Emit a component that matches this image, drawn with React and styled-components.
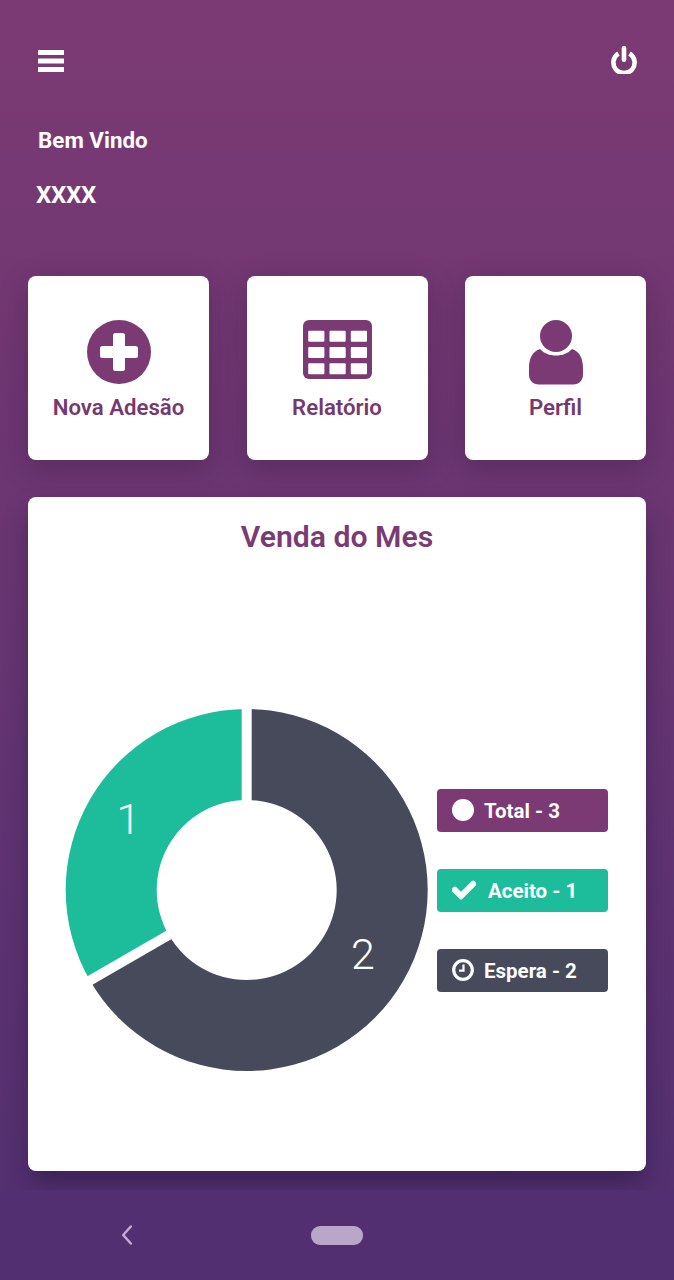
import React from "react";
import styled, { createGlobalStyle } from "styled-components";
import { FaCheck } from "react-icons/fa";

const PURPLE = "#7b3a73";
const GREEN = "#1dbd9b";
const SLATE = "#464a5b";

const GlobalStyle = createGlobalStyle`
  html, body {
    margin: 0;
    padding: 0;
  }
  body {
    font-family: Roboto, "Liberation Sans", sans-serif;
  }
`;

const Page = styled.div`
  width: 674px;
  height: 1280px;
  overflow: hidden;
  display: flex;
  flex-direction: column;
  background: linear-gradient(180deg, #7c3a73 0%, #502f70 100%);
`;

const Content = styled.div`
  flex: 1;
  min-height: 0;
  padding: 0 28px;
`;

const TopBar = styled.div`
  display: flex;
  justify-content: space-between;
  align-items: flex-start;
  height: 46px;
  padding: 46px 9px 0 10px;
  color: #fff;
`;

const Greeting = styled.div`
  height: 23px;
  margin: 35px 0 0 10px;
  font-size: 22.4px;
  line-height: 26px;
  font-weight: 700;
  color: #fff;
`;

const UserName = styled.div`
  height: 28px;
  margin: 31px 0 0 8px;
  font-size: 24px;
  line-height: 28px;
  font-weight: 700;
  letter-spacing: -0.2px;
  color: #fff;
`;

const Shortcuts = styled.div`
  display: flex;
  justify-content: space-between;
  margin-top: 67px;
`;

const Shortcut = styled.div`
  width: 181px;
  height: 184px;
  box-sizing: border-box;
  padding-top: 44px;
  display: flex;
  flex-direction: column;
  align-items: center;
  background: #fff;
  border-radius: 8px;
  box-shadow: 0 8px 28px rgba(40, 15, 50, 0.28);
  color: ${PURPLE};
`;

const IconSlot = styled.div`
  height: 65px;
  display: flex;
  align-items: flex-start;
`;

const ShortcutLabel = styled.div`
  margin-top: 9px;
  font-size: 22.2px;
  line-height: 26px;
  font-weight: 600;
  color: #75396f;
`;

const ChartCard = styled.div`
  margin-top: 37px;
  height: 674px;
  display: flex;
  flex-direction: column;
  background: #fff;
  border-radius: 8px;
  box-shadow: 0 14px 24px -4px rgba(30, 15, 50, 0.5);
`;

const ChartTitle = styled.div`
  height: 112px;
  box-sizing: border-box;
  padding-top: 23px;
  text-align: center;
  font-size: 30.2px;
  line-height: 34px;
  font-weight: 600;
  color: ${PURPLE};
`;

const ChartBody = styled.div`
  flex: 1;
  display: flex;
  align-items: center;
  padding-left: 37px;
`;

const Donut = styled.svg`
  display: block;
  flex: none;
`;

const SliceValue = styled.text`
  font-family: Roboto, "Liberation Sans", sans-serif;
  font-size: 43px;
  font-weight: 300;
  fill: #fff;
  text-anchor: middle;
`;

const Legend = styled.div`
  display: flex;
  flex-direction: column;
  gap: 37px;
  margin-left: 8px;
`;

const LegendItem = styled.div`
  width: 171px;
  height: 43px;
  box-sizing: border-box;
  padding-left: 15px;
  display: flex;
  align-items: center;
  gap: ${(props) => props.$gap}px;
  border-radius: 4px;
  background: ${(props) => props.$color};
  color: #fff;
  font-size: 20.5px;
  font-weight: 700;
`;

const LegendText = styled.span`
  position: relative;
  top: 1px;
`;

const Dot = styled.span`
  width: 22px;
  height: 22px;
  border-radius: 50%;
  background: #fff;
`;

const NavBar = styled.div`
  position: relative;
  height: 90px;
  flex: none;
  box-sizing: border-box;
  padding: 0 121px;
  display: grid;
  grid-template-columns: 1fr auto 1fr;
  align-items: center;
  background: #522f70;
`;

const HomePill = styled.div`
  width: 52px;
  height: 19px;
  border-radius: 9px;
  background: #b9a6c9;
`;

const MenuIcon = () => (
  <svg width="26" height="26" viewBox="0 0 26 26" fill="currentColor">
    <rect y="4" width="26" height="5" rx="0.5" />
    <rect y="12.500" width="26" height="5" rx="0.5" />
    <rect y="21" width="26" height="5" rx="0.5" />
  </svg>
);

const PowerIcon = () => (
  <svg width="26" height="28" viewBox="0 0 26 28" fill="none" stroke="currentColor" strokeWidth="4.6">
    <path d="M7.5 7.5A10.6 10.6 0 1 0 18.5 7.5" />
    <path d="M13 2.2v11.6" strokeLinecap="round" />
  </svg>
);

const PlusIcon = () => (
  <svg width="64" height="64" viewBox="0 0 64 64">
    <circle cx="32" cy="32" r="32" fill="currentColor" />
    <path
      d="M28.5 13h7a2.5 2.5 0 0 1 2.500 2.500v10.500h10.500a2.500 2.500 0 0 1 2.500 2.500v7a2.500 2.500 0 0 1-2.500 2.500h-10.500v10.500a2.500 2.500 0 0 1-2.500 2.500h-7a2.500 2.500 0 0 1-2.500-2.500v-10.500h-10.500a2.500 2.500 0 0 1-2.500-2.500v-7a2.500 2.500 0 0 1 2.500-2.500h10.500v-10.500a2.500 2.500 0 0 1 2.500-2.500z"
      fill="#fff"
    />
  </svg>
);

const tableCells = [0, 1, 2].flatMap((row) =>
  [0, 1, 2].map((col) => ({ x: 5.2 + col * 21.3, y: 10.8 + row * 16.2 }))
);

const TableIcon = () => (
  <svg width="69" height="59" viewBox="0 0 69 59">
    <rect width="69" height="59" rx="6" fill="currentColor" />
    {tableCells.map((cell) => (
      <rect key={`${cell.x}-${cell.y}`} x={cell.x} y={cell.y} width="16.2" height="11" rx="1" fill="#fff" />
    ))}
  </svg>
);

const PersonIcon = () => (
  <svg width="54" height="65" viewBox="0 0 54 65" fill="currentColor">
    <circle cx="27" cy="16" r="16" />
    <path d="M11 29c4 4.500 10 6.500 16 6.500s12-2 16-6.500c7 2 11 9 11 19v6.500c0 6-4 10-10 10H10c-6 0-10-4-10-10V48c0-10 4-17 11-19z" />
  </svg>
);

const ClockIcon = () => (
  <svg width="22" height="22" viewBox="0 0 22 22" fill="none" stroke="#fff">
    <circle cx="11" cy="11" r="9.300" strokeWidth="3.200" />
    <path d="M11.500 5.500v6.200H7" strokeWidth="2.200" />
  </svg>
);

const BackIcon = () => (
  <svg width="12" height="20" viewBox="0 0 12 20" fill="none" stroke="#c3a9d3" strokeWidth="2.500" strokeLinecap="round" strokeLinejoin="round">
    <path d="M9.800 1.500L2.200 10l7.600 8.500" />
  </svg>
);

// donut drawn around its own centre, angles counted clockwise from the top
const CX = 181.7;
const CY = 182;
const OUTER = 181;
const INNER = 90;

const point = (radius, deg) => {
  const rad = (deg * Math.PI) / 180;
  return `${CX + radius * Math.sin(rad)} ${CY - radius * Math.cos(rad)}`;
};

const slicePath = (from, to) => {
  const large = to - from > 180 ? 1 : 0;
  return [
    `M${point(OUTER, from)}`,
    `A${OUTER} ${OUTER} 0 ${large} 1 ${point(OUTER, to)}`,
    `L${point(INNER, to)}`,
    `A${INNER} ${INNER} 0 ${large} 0 ${point(INNER, from)}`,
    "Z",
  ].join(" ");
};

const slices = [
  { from: 0, to: 240, color: SLATE },
  { from: 240, to: 360, color: GREEN },
];

const shortcuts = [
  { label: "Nova Adesão", icon: <PlusIcon /> },
  { label: "Relatório", icon: <TableIcon /> },
  { label: "Perfil", icon: <PersonIcon /> },
];

const App = () => (
  <Page>
    <GlobalStyle />
    <Content>
      <TopBar>
        <MenuIcon />
        <PowerIcon />
      </TopBar>
      <Greeting>Bem Vindo</Greeting>
      <UserName>XXXX</UserName>
      <Shortcuts>
        {shortcuts.map((item) => (
          <Shortcut key={item.label}>
            <IconSlot>{item.icon}</IconSlot>
            <ShortcutLabel>{item.label}</ShortcutLabel>
          </Shortcut>
        ))}
      </Shortcuts>
      <ChartCard>
        <ChartTitle>Venda do Mes</ChartTitle>
        <ChartBody>
          <Donut width="364" height="364" viewBox="0 0 364 364">
            {slices.map((slice) => (
              <path key={slice.from} d={slicePath(slice.from, slice.to)} fill={slice.color} />
            ))}
            <path d={`M${point(INNER - 2, 0)} L${point(OUTER + 3, 0)}`} stroke="#fff" strokeWidth="10" />
            <path d={`M${point(INNER - 2, 240)} L${point(OUTER + 3, 240)}`} stroke="#fff" strokeWidth="10" />
            <SliceValue x="63.500" y="126">1</SliceValue>
            <SliceValue x="298" y="261">2</SliceValue>
          </Donut>
          <Legend>
            <LegendItem $color={PURPLE} $gap={10}>
              <Dot />
              <LegendText>Total - 3</LegendText>
            </LegendItem>
            <LegendItem $color={GREEN} $gap={12}>
              <FaCheck size={24} stroke="currentColor" strokeWidth={24} />
              <LegendText>Aceito - 1</LegendText>
            </LegendItem>
            <LegendItem $color={SLATE} $gap={10}>
              <ClockIcon />
              <LegendText>Espera - 2</LegendText>
            </LegendItem>
          </Legend>
        </ChartBody>
      </ChartCard>
    </Content>
    <NavBar>
      <BackIcon />
      <HomePill />
    </NavBar>
  </Page>
);

export default App;
